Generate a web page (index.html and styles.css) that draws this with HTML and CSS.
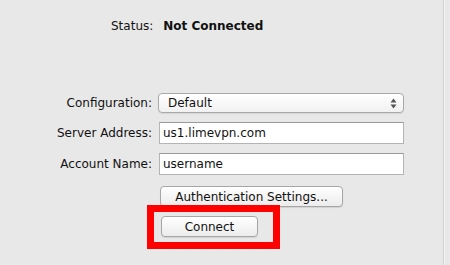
FILE: index.html
```html
<!DOCTYPE html>
<html lang="en">
<head>
  <meta charset="UTF-8" />
  <title>VPN Connection</title>
  <link rel="stylesheet" href="styles.css">
</head>
<body>
  <div class="pane">
    <div class="status-row">
      <span class="status-label">Status:</span>
      <span class="status-value">Not Connected</span>
    </div>

    <div class="form">
      <label class="form-label" for="config">Configuration:</label>
      <div class="popup" id="config">
        <span>Default</span>
        <svg class="arrows" width="7" height="11" viewBox="0 0 7 11">
          <path d="M3.5 0.5 L6.5 4.5 L0.5 4.5 Z" fill="#555" />
          <path d="M3.5 10.5 L6.5 6.5 L0.5 6.5 Z" fill="#555" />
        </svg>
      </div>

      <label class="form-label" for="server">Server Address:</label>
      <input class="field" type="text" id="server" value="us1.limevpn.com" />

      <label class="form-label" for="account">Account Name:</label>
      <input class="field" type="text" id="account" value="username" />
    </div>

    <div class="buttons">
      <button class="btn btn-auth">Authentication Settings...</button>
      <div class="highlight">
        <button class="btn btn-connect">Connect</button>
      </div>
    </div>
  </div>
</body>
</html>
```

FILE: styles.css
```css
body {
  margin: 0;
  background: #e8e8e8;
  font-family: "DejaVu Sans", "Liberation Sans", sans-serif;
  font-size: 12px;
  color: #111;
  height: 265px;
  overflow: hidden;
}

.pane {
  width: 444px;
  height: 265px;
  border-right: 1px solid #d2d2d2;
  box-shadow: 1px 0 0 #f4f4f4;
  box-sizing: border-box;
}

.status-row {
  display: flex;
  gap: 10px;
  padding: 16px 0 0 111px;
  height: 20px;
  align-items: center;
}

.status-value {
  font-weight: bold;
}

.form {
  display: grid;
  grid-template-columns: 152px 246px;
  column-gap: 6px;
  row-gap: 9px;
  margin-top: 57px;
  align-items: center;
}

.form-label {
  text-align: right;
}

.popup {
  height: 20px;
  box-sizing: border-box;
  border: 1px solid #a9a9a9;
  border-radius: 4px;
  background: linear-gradient(#ffffff, #f1f1f1);
  display: flex;
  align-items: center;
  justify-content: space-between;
  padding: 0 6px 0 9px;
  box-shadow: 0 1px 1px rgba(0, 0, 0, 0.08);
}

.field {
  height: 22px;
  box-sizing: border-box;
  border: 1px solid #b4b4b4;
  border-top-color: #9a9a9a;
  background: #fff;
  font: inherit;
  color: #111;
  padding: 0 3px;
  margin: 0 0 0 1px;
  outline: none;
}

.buttons {
  display: flex;
  flex-direction: column;
  align-items: flex-start;
  padding: 11px 0 0 160px;
}

.btn {
  font: inherit;
  color: #111;
  height: 21px;
  border: 1px solid #a6a6a6;
  border-radius: 4px;
  background: linear-gradient(#ffffff, #ececec);
  box-shadow: 0 1px 1px rgba(0, 0, 0, 0.1);
  padding: 0;
}

.btn-auth {
  width: 183px;
}

.highlight {
  margin: -2px 0 0 -13px;
  border: 7px solid #ff0000;
  padding: 4px 15px 5px 7px;
}

.btn-connect {
  width: 97px;
  display: block;
}
```
